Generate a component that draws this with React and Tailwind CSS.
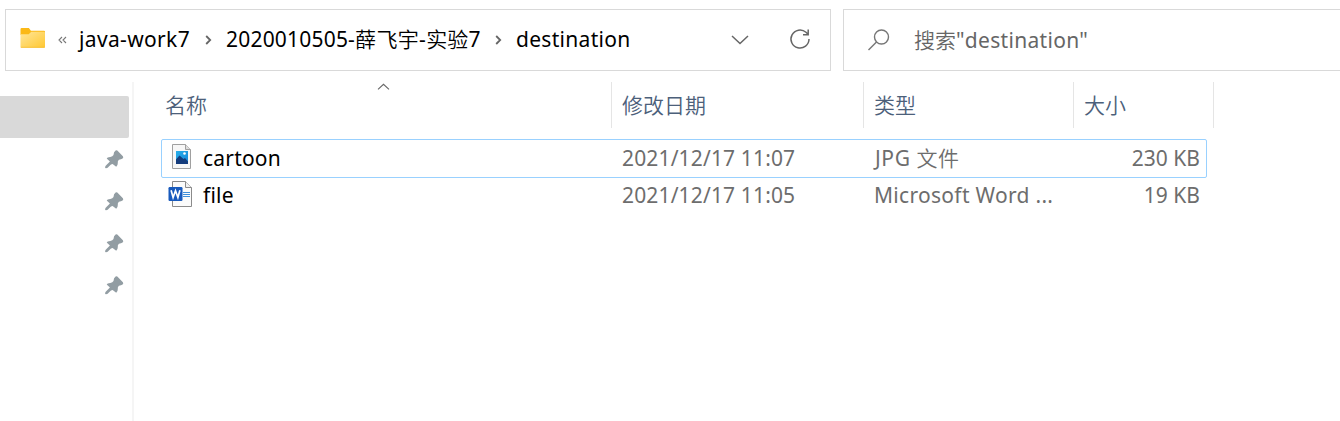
import React from "react";

function Folder() {
  return (
    <svg className="block h-[22px] w-[26px] shrink-0" viewBox="0 0 26 22">
      <defs>
        <linearGradient id="folder" x1="0" y1="0" x2="1" y2="1">
          <stop offset="0" stopColor="#ffe69a" />
          <stop offset="1" stopColor="#ffc832" />
        </linearGradient>
      </defs>
      <path d="M.5 2.2Q.5 1 1.7 1h7.2l2 2.8H24q1 0 1 1V8H.5z" fill="#fbb917" />
      <path d="M.5 7.3h8.2l2.6-2.6H24q1 0 1 1v14q0 1-1 1H1.6q-1.1 0-1.1-1z" fill="url(#folder)" />
      <path d="M.8 20.3h24" stroke="#f5bd35" strokeWidth=".8" />
    </svg>
  );
}

function Crumb() {
  return (
    <svg className="block h-[10px] w-[7px] shrink-0" viewBox="0 0 7 10">
      <path d="M1.2 1l4 4-4 4" fill="none" stroke="#666" strokeWidth="1.8" />
    </svg>
  );
}

function Pin() {
  return (
    <div className="flex h-[42px] items-center justify-end pr-2">
      <svg className="block h-5 w-5" viewBox="0 0 20 20">
        <path
          d="M11.6 1.5q.9-.7 1.7 0l5.6 5.8q.9 1.2-.3 2.3-1.4.9-3.7 1.1-1.5 1.2-1.1 3.3 0 3-1.6 3.7L8.6 14.9q-1.6 0-3.2 2.1-2.2 2.7-3.7 2.2-1.5-.8 0-2.4l4.2-4.4L2.7 9.5q.4-1.5 3.4-1.6 2.5.1 3.4-1.8.1-3.2 2.1-4.6z"
          fill="#929da3"
        />
      </svg>
    </div>
  );
}

function ImageFile() {
  return (
    <svg className="block h-[27px] w-[26px]" viewBox="0 0 26 27">
      <defs>
        <linearGradient id="sky" x1="0" y1="0" x2="1" y2="1">
          <stop offset="0" stopColor="#28afea" />
          <stop offset="1" stopColor="#1685d9" />
        </linearGradient>
      </defs>
      <path d="M4.5.5h13l5 5v19h-18z" fill="#f7f7f7" stroke="#a0a0a0" />
      <path d="M17.5.5v5h5" fill="#ddd" stroke="#a0a0a0" />
      <path d="M8 7h12v13H8z" fill="url(#sky)" />
      <path d="M8 15.5l3.5-4 4 3.5 1.5-1 3 3.5V20H8z" fill="#143c7c" />
      <circle cx="16.5" cy="9.5" r="1.3" fill="#fff" />
    </svg>
  );
}

function WordFile() {
  return (
    <svg className="block h-[28px] w-[26px]" viewBox="0 0 26 28">
      <path d="M4.5 1.5h13l6 6v19h-19z" fill="#fbfbfb" stroke="#8b8b8b" />
      <path d="M17.5 1.5v6h6" fill="#f0f0f0" stroke="#8b8b8b" />
      <path d="M15 12.5h7M15 14.5h7M15 16.5h7" stroke="#3f8fdc" strokeWidth="1" />
      <rect x="0.5" y="7" width="14" height="14" rx="1.2" fill="#185abd" />
      <path d="M3.1 10.3l2 7.2 2.4-6.7 2.4 6.7 2-7.2" fill="none" stroke="#fff" strokeWidth="1.7" />
    </svg>
  );
}

function Row({ icon, name, date, type, size, framed }) {
  return (
    <div
      className={
        framed
          ? "flex h-[39px] w-[1046px] items-center rounded-[2px] border border-[#99d1ff] text-[#6d6d6d]"
          : "flex h-[36px] w-[1046px] items-center border-x border-transparent text-[#6d6d6d]"
      }
    >
      <div className="flex w-[460px] items-center pl-[6px]">
        <div className={framed ? "-mt-0.5" : "-mt-1"}>{icon}</div>
        <span className="ml-[9px] pb-0.5 tracking-[0.2px] text-black">{name}</span>
      </div>
      <div className="w-[252px] pb-0.5 tracking-[0.15px]">{date}</div>
      <div className="w-[210px] pb-0.5">{type}</div>
      <div className="flex-1 pr-[6px] pb-0.5 text-right">{size}</div>
    </div>
  );
}

export default function App() {
  return (
    <div className="flex h-[421px] w-[1340px] flex-col overflow-hidden bg-white font-['Noto_Sans','Noto_Sans_CJK_SC',sans-serif] text-[21px] leading-[30px] whitespace-nowrap text-black">
      <div className="flex h-[82px] shrink-0 gap-3 pt-[9px] pl-[5px]">
        <div className="flex h-[62px] w-[826px] shrink-0 items-center border border-[#d9d9d9] pl-[14px]">
          <div className="-mt-1">
            <Folder />
          </div>
          <svg className="ml-[12px] h-2 w-[9px] shrink-0" viewBox="0 0 9 8">
            <path d="M4 1L1 4l3 3M8 1L5 4l3 3" fill="none" stroke="#777" strokeWidth="1.1" />
          </svg>
          <div className="ml-[12px] w-[126px] pb-0.5 tracking-[0.35px]">java-work7</div>
          <Crumb />
          <div className="ml-[14px] w-[269px] pb-0.5">
            <span className="tracking-[0.2px]">2020010505-</span>
            <span className="font-[350] tracking-[0.3px]">薛飞宇</span>
            <span className="tracking-[0.4px]">-</span>
            <span className="font-[350] tracking-[0.2px]">实验</span>7
          </div>
          <Crumb />
          <div className="ml-[14px] w-[215px] pb-0.5 tracking-[0.3px]">destination</div>
          <svg className="h-[12px] w-[18px] shrink-0" viewBox="0 0 18 12">
            <path d="M1 2l8 7.5L17 2" fill="none" stroke="#666" strokeWidth="1.5" />
          </svg>
          <svg className="-mt-0.5 ml-[40px] h-[22px] w-[22px] shrink-0" viewBox="0 0 22 22">
            <path d="M20 11a9 9 0 1 1-3-6.7l2 1.9M19.2 1.5v5.2H14" fill="none" stroke="#666" strokeWidth="1.5" />
          </svg>
        </div>
        <div className="flex h-[62px] flex-1 items-center border border-r-0 border-[#d9d9d9] pl-[23px] text-[#666]">
          <svg className="h-[24px] w-[24px] shrink-0" viewBox="0 0 24 24">
            <circle cx="14.5" cy="9" r="7" fill="none" stroke="#767676" strokeWidth="1.4" />
            <path d="M9.5 14L1.5 22" stroke="#767676" strokeWidth="1.5" />
          </svg>
          <div className="ml-[23px]">
            <span className="font-[350]">搜索</span>
            <span className="tracking-[0.3px]">"destination"</span>
          </div>
        </div>
      </div>
      <div className="flex min-h-0 flex-1">
        <div className="w-[132px] shrink-0 pt-[14px]">
          <div className="h-[42px] w-[129px] rounded-r-[2px] bg-[#d9d9d9]" />
          <Pin />
          <Pin />
          <Pin />
          <Pin />
        </div>
        <div className="mr-[27px] w-[2px] shrink-0 bg-[#f5f5f5]" />
        <div>
          <div className="flex h-[46px] items-center font-[350] text-[#4c607a]">
            <div className="relative h-full w-[451px] border-r border-[#e5e5e5] pt-[8px] pl-[4px]">
              名称
              <svg className="absolute top-[1px] left-[216px] h-[7px] w-[13px]" viewBox="0 0 13 7">
                <path d="M1 6.3l5.5-5 5.5 5" fill="none" stroke="#666" strokeWidth="1.1" />
              </svg>
            </div>
            <div className="h-full w-[252px] border-r border-[#e5e5e5] pt-[8px] pl-[10px]">修改日期</div>
            <div className="h-full w-[210px] border-r border-[#e5e5e5] pt-[8px] pl-[10px]">类型</div>
            <div className="h-full w-[140px] border-r border-[#e5e5e5] pt-[8px] pl-[10px]">大小</div>
          </div>
          <div className="pt-[11px]">
            <Row
              framed
              icon={<ImageFile />}
              name="cartoon"
              date="2021/12/17 11:07"
              type={
                <span className="pl-px">
                  <span className="tracking-[0.6px]">JPG </span>
                  <span className="font-[350] tracking-[0.3px]">文件</span>
                </span>
              }
              size="230 KB"
            />
            <Row
              icon={<WordFile />}
              name="file"
              date="2021/12/17 11:05"
              type={<span className="tracking-[0.3px]">Microsoft Word ...</span>}
              size="19 KB"
            />
          </div>
        </div>
      </div>
    </div>
  );
}
